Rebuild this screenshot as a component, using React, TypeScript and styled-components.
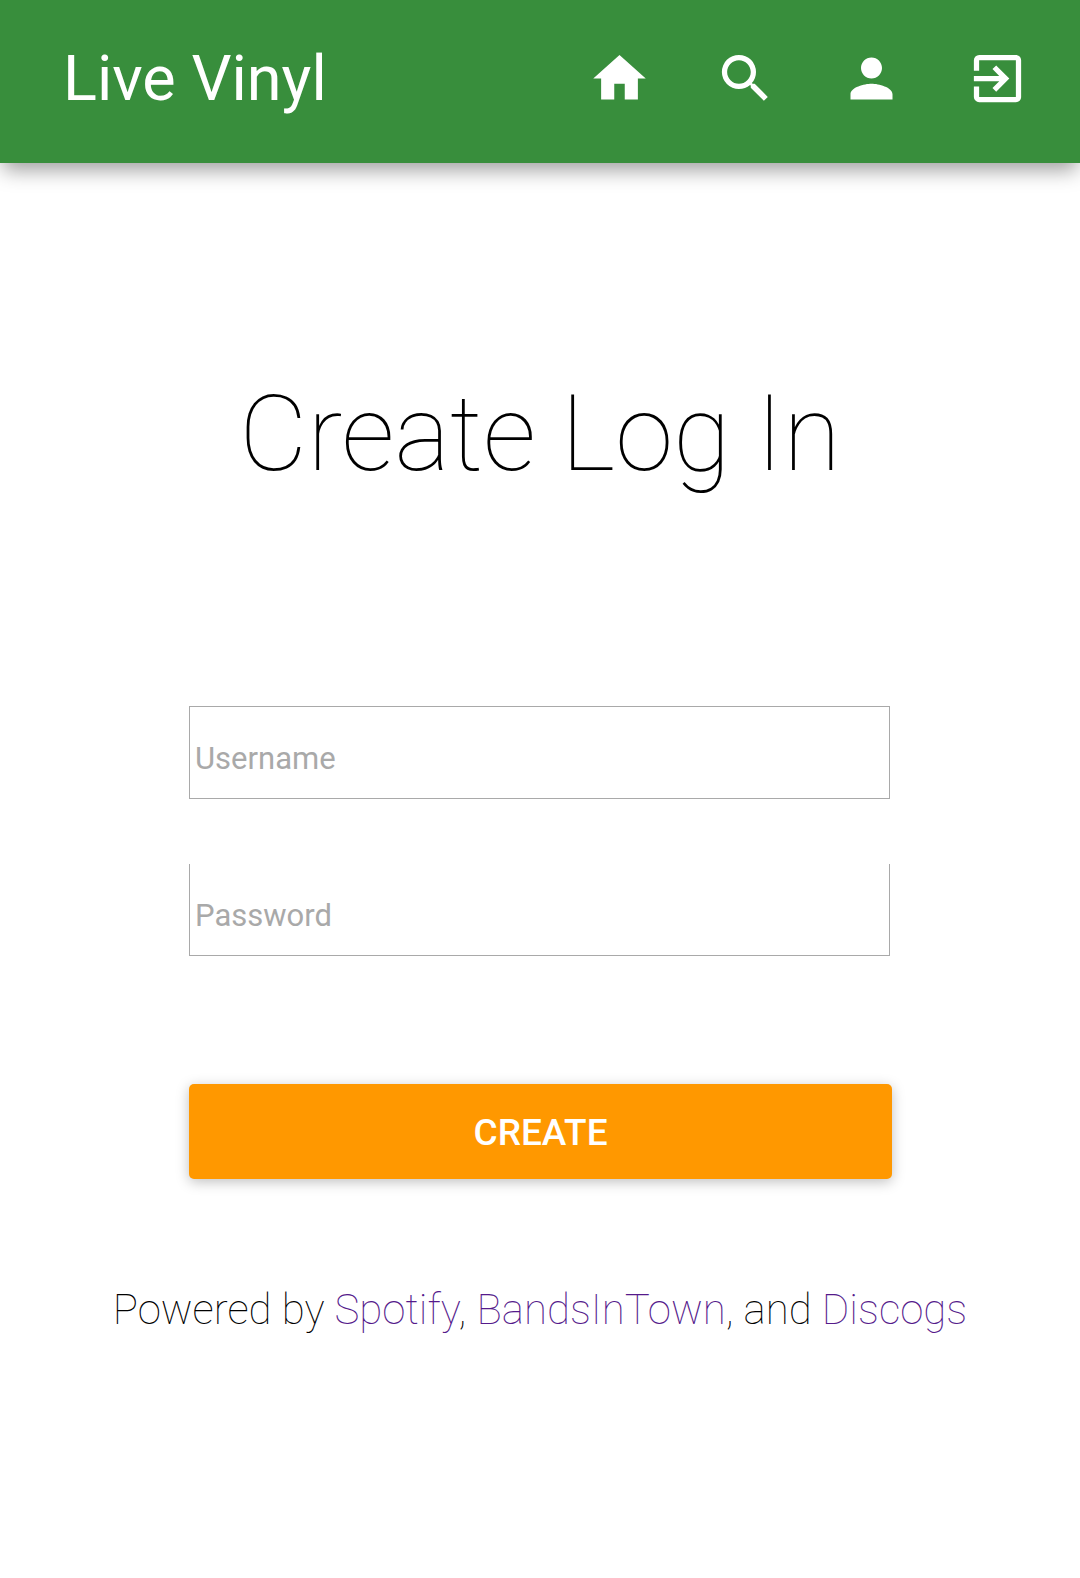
import React from "react";
import styled, { createGlobalStyle } from "styled-components";
import { MdHome, MdSearch, MdPerson, MdExitToApp } from "react-icons/md";

const GlobalStyle = createGlobalStyle`
  *, *::before, *::after { box-sizing: border-box; }
  body {
    margin: 0;
    background: #fff;
    color: #000;
    font-family: Roboto, "Noto Sans", sans-serif;
  }
`;

const TopBar = styled.header`
  display: flex;
  align-items: flex-start;
  justify-content: space-between;
  padding: 42px 20px 47px 63px;
  background: #388e3c;
  color: #fff;
  box-shadow: 0 10px 19px -3px rgba(0, 0, 0, 0.38);
`;

const Brand = styled.a`
  color: inherit;
  font-size: 63px;
  line-height: 74px;
  text-decoration: none;
`;

const Nav = styled.nav`
  display: flex;
  padding-top: 5px;
`;

const NavButton = styled.button`
  display: flex;
  justify-content: center;
  width: 126px;
  padding: 0;
  border: 0;
  background: none;
  color: inherit;
  font-size: 63px;
`;

const Main = styled.main`
  display: flex;
  flex-direction: column;
`;

const Title = styled.h1`
  margin: 210px 0 0;
  font-size: 105px;
  font-weight: 100;
  line-height: 124px;
  text-align: center;
`;

const Form = styled.form`
  display: flex;
  flex-direction: column;
  margin: 209px 17.4% 0 17.5%;
`;

const Field = styled.input<{ $openTop?: boolean }>`
  width: calc(100% - 2px);
  height: ${(p) => (p.$openTop ? 92 : 93)}px;
  margin: 0 0 65px;
  padding: 12px 5px 0;
  border: 1px solid #a9a9a9;
  border-top-width: ${(p) => (p.$openTop ? 0 : 1)}px;
  border-radius: 0;
  background: transparent;
  color: #000;
  font: 400 31px/40px Roboto, "Noto Sans", sans-serif;
  outline: none;

  &::placeholder {
    color: #a9a9a9;
    opacity: 1;
  }
`;

const SubmitButton = styled.button`
  height: 95px;
  margin-top: 63px;
  padding: 3px 0 0;
  border: 0;
  border-radius: 5px;
  background: #ff9800;
  color: #fff;
  font: 500 37px/48px Roboto, "Noto Sans", sans-serif;
  text-transform: uppercase;
  box-shadow: 0 3px 13px rgba(0, 0, 0, 0.25);
`;

const Credits = styled.footer`
  margin-top: 106px;
  font-size: 42px;
  font-weight: 100;
  line-height: 50px;
  text-align: center;
`;

const CreditLink = styled.a`
  color: #551a8b;
  text-decoration: none;
`;

const navItems = [
  { label: "Home", Icon: MdHome },
  { label: "Search", Icon: MdSearch },
  { label: "Profile", Icon: MdPerson },
  { label: "Log out", Icon: MdExitToApp },
];

export default function App() {
  return (
    <>
      <GlobalStyle />
      <TopBar>
        <Brand href="#home">Live Vinyl</Brand>
        <Nav>
          {navItems.map(({ label, Icon }) => (
            <NavButton key={label} type="button" aria-label={label}>
              <Icon />
            </NavButton>
          ))}
        </Nav>
      </TopBar>
      <Main>
        <Title>Create Log In</Title>
        <Form onSubmit={(e) => e.preventDefault()}>
          <Field type="text" placeholder="Username" aria-label="Username" />
          <Field type="password" placeholder="Password" aria-label="Password" $openTop />
          <SubmitButton type="submit">Create</SubmitButton>
        </Form>
      </Main>
      <Credits>
        Powered by <CreditLink href="#spotify">Spotify</CreditLink>,{" "}
        <CreditLink href="#bandsintown">BandsInTown</CreditLink>, and{" "}
        <CreditLink href="#discogs">Discogs</CreditLink>
      </Credits>
    </>
  );
}
